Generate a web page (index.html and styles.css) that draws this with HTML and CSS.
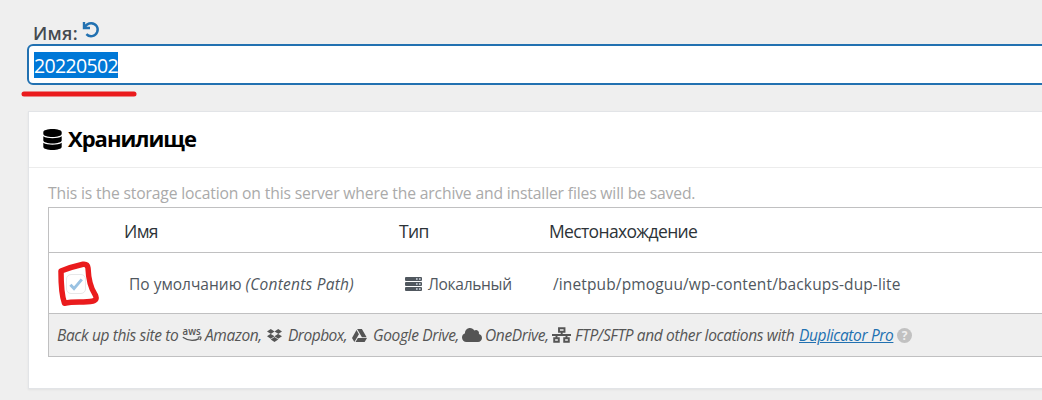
FILE: index.html
```html
<!DOCTYPE html>
<html lang="ru">
<head>
<meta charset="utf-8">
<title>Duplicator</title>
<link rel="stylesheet" href="styles.css">
</head>
<body>
<main class="page">
  <div class="name-row"><label class="name-label" for="package-name">Имя:</label>
    <svg class="undo" viewBox="0 0 18 18"><path d="M2 1v6h6M2.6 6.600C4 3.700 6.200 2.200 9.300 2.200a6.500 6.500 0 1 1-4.900 10.900" fill="none" stroke="currentColor" stroke-width="2.400"/></svg>
  </div>
  <div class="name-input" id="package-name"><span class="selected">20220502</span></div>
  <svg class="mark mark-line" viewBox="0 0 116 8"><path d="M3 4H113" /></svg>
  <section class="box">
    <header class="box-head">
      <svg class="db" viewBox="0 0 448 512"><path d="M448 73.143v45.714C448 159.143 347.667 192 224 192S0 159.143 0 118.857V73.143C0 32.857 100.333 0 224 0s224 32.857 224 73.143zM448 176v102.857C448 319.143 347.667 352 224 352S0 319.143 0 278.857V176c48.125 33.143 136.208 48.572 224 48.572S399.874 209.143 448 176zm0 160v102.857C448 479.143 347.667 512 224 512S0 479.143 0 438.857V336c48.125 33.143 136.208 48.572 224 48.572S399.874 369.143 448 336z"/></svg>
      <h2 class="box-title">Хранилище</h2>
    </header>
    <div class="box-body">
      <p class="hint">This is the storage location on this server where the archive and installer files will be saved.</p>
      <div class="table">
        <div class="row head"><span></span><span class="th-name">Имя</span><span class="th-type">Тип</span><span class="th-loc">Местонахождение</span></div>
        <div class="row item">
          <span class="check"><svg class="tick" viewBox="0 0 14 13"><path d="M1.400 6.800L5 10.600L12.800 1.400" fill="none" stroke="currentColor" stroke-width="3"/></svg></span>
          <span class="td"><span class="td-name">По умолчанию</span> <i class="td-path">(Contents Path)</i></span>
          <span class="td type"><svg class="server" viewBox="0 0 17 14"><path d="M1 0h15q1 0 1 1v2q0 1-1 1H1Q0 4 0 3V1Q0 0 1 0zM1 5h15q1 0 1 1v2q0 1-1 1H1Q0 9 0 8V6Q0 5 1 5zM1 10h15q1 0 1 1v2q0 1-1 1H1q-1 0-1-1v-2q0-1 1-1z" fill="currentColor"/><path d="M11 1.200h1.600v1.600H11zM14 1.200h1.600v1.600H14zM11 6.200h1.600v1.600H11zM14 6.200h1.600v1.600H14zM11 11.200h1.600v1.600H11zM14 11.200h1.600v1.600H14z" fill="#cfd8e4"/></svg><span class="td-local">Локальный</span></span>
          <span class="td td-loc">/inetpub/pmoguu/wp-content/backups-dup-lite</span>
        </div>
        <div class="row foot">
          <span class="f f-back">Back up this site to</span>
          <svg class="ic ic-aws" viewBox="0 0 20 14"><text class="aws-text" x="0.6" y="6.8" textLength="18" lengthAdjust="spacingAndGlyphs">aws</text><path d="M.8 9.200C6 12.800 12.500 13 17.200 10.600M15.800 9.300Q18.800 8.500 19 9.200Q19.200 10.500 17.800 12" fill="none" stroke="currentColor" stroke-width="1.300"/></svg>
          <span class="f f-amazon">Amazon,</span>
          <svg class="ic ic-dropbox" viewBox="0 32 528 448" preserveAspectRatio="none"><path d="M264.400 116.300l-132 84.300 132 84.300-132 84.300L0 284.100l132.300-84.300L0 116.300 132.300 32l132.100 84.300zM131.600 395.700l132-84.300 132 84.300-132 84.300-132-84.300zm132.800-111.600l132-84.300-132-83.600L395.700 32 528 116.300l-132.300 84.300L528 284.800l-132.300 84.300-131.300-85z"/></svg>
          <span class="f f-dropbox">Dropbox,</span>
          <svg class="ic ic-drive" viewBox="0 32 512 448" preserveAspectRatio="none"><path d="M339 314.900L175.400 32h161.200l163.600 282.900H339zm-137.500 23.600L120.900 480h310.500L512 338.500H201.500zM154.100 67.400L0 338.500 80.600 480 237 208.800 154.100 67.400z"/></svg>
          <span class="f f-google">Google Drive,</span>
          <svg class="ic ic-cloud" viewBox="0 32 640 448" preserveAspectRatio="none"><path d="M537.600 226.600c4.100-10.700 6.400-22.400 6.400-34.600 0-53-43-96-96-96-19.700 0-38.100 6-53.300 16.200C367 64.200 315.300 32 256 32c-88.400 0-160 71.600-160 160 0 2.700.1 5.400.2 8.100C40.200 219.800 0 273.200 0 336c0 79.500 64.500 144 144 144h368c70.700 0 128-57.300 128-128 0-61.900-44-113.600-102.400-125.400z"/></svg>
          <span class="f f-one">OneDrive,</span>
          <svg class="ic ic-net" viewBox="0 0 19 16"><path d="M7 1.200h5.500v3.600H7zM2.200 11.200h4.600v3.600H2.200zM12.200 11.200h4.600v3.600h-4.600zM9.700 5v3M0 8h19M4.500 8v3M14.500 8v3" fill="none" stroke="currentColor" stroke-width="1.900"/></svg>
          <span class="f f-ftp">FTP/SFTP and other locations with</span>
          <a class="f f-pro" href="#">Duplicator Pro</a>
          <span class="help">?</span>
        </div>
        <svg class="mark mark-loop" viewBox="0 0 46 46"><path d="M4 11C10 8.500 18 6 26 4.200Q30.500 3.700 31 8C31.500 20 33 27 38 34.500Q41 39.500 36 41C26 43 18 41 7.500 43.200Q4 34 4 11Z"/></svg>
      </div>
    </div>
  </section>
</main>
</body>
</html>
```
FILE: styles.css
```css
* { box-sizing: border-box; }
body { margin: 0; background: #efefef; overflow: hidden; width: 1042px; height: 400px; font-family: "Open Sans", "Noto Sans", sans-serif; color: #50575e; font-size: 15.5px; white-space: nowrap; }
.page { position: relative; padding: 18px 0 0 27px; }
.name-row { display: flex; height: 26px; padding-left: 6px; gap: 4px; }
.name-label { font-size: 18px; line-height: 30px; font-weight: 600; width: 45px; color: #444a50; letter-spacing: 0.3px; }
.undo { width: 18px; height: 18px; color: #2271b1; margin-top: 3px; }
.name-input { height: 41px; width: 1030px; border: 2px solid #2271b1; border-radius: 6px; background: #fff; padding: 6px 0 0 5px; }
.selected { display: block; width: 84px; height: 26px; background: #0078d7; color: #fff; font-size: 19.5px; line-height: 28px; letter-spacing: -0.66px; }
.mark { position: absolute; fill: none; stroke: #ea1b1d; stroke-linecap: round; stroke-linejoin: round; }
.mark-line { left: 21px; top: 90px; width: 116px; height: 8px; stroke-width: 5; }
.box { margin: 26px 0 0 1px; width: 1030px; height: 278px; border: 1px solid #e2e4e7; background: #fff; box-shadow: 0 1px 2px rgba(0,0,0,.06); }
.box-head { height: 56px; border-bottom: 1px solid #ececec; display: flex; align-items: center; padding-left: 14px; color: #000; gap: 6px; }
.db { width: 19px; height: 21px; }
.box-title { margin: -4px 0 0; font-size: 22px; line-height: 30px; font-weight: 700; letter-spacing: -1px; }
.box-body { padding: 13px 0 0 19px; }
.hint { margin: 0; height: 26px; line-height: 25px; color: #aaa; font-size: 15.7px; letter-spacing: -0.16px; }
.table { position: relative; width: 1020px; height: 150px; border: 1px solid #c0c0c1; }
.row { display: grid; grid-template-columns: 75px 275px 150px 1fr; align-items: center; }
.head { height: 45px; border-bottom: 1px solid #c0c0c1; color: #2c3338; font-size: 17.5px; padding-top: 1px; letter-spacing: -0.65px; }
.item { height: 61px; border-bottom: 1px solid #c0c0c1; padding-top: 2px; }
.td { padding-left: 5px; }
.td-path { letter-spacing: 0.24px; }
.td-local { letter-spacing: -0.3px; }
.td-loc { padding-left: 4px; letter-spacing: 0.13px; }
.type { display: flex; align-items: center; gap: 6px; padding-left: 6px; }
.server { width: 17px; height: 14px; }
.check { width: 20px; height: 20px; margin-left: 17px; border: 1px solid #e7e8e9; border-radius: 5px; display: flex; align-items: center; justify-content: center; }
.tick { width: 14px; height: 13px; color: #9ac2e2; }
.foot { display: flex; height: 42px; background: #efefef; padding-left: 8px; font-style: italic; color: #555; }
.f { flex: none; white-space: nowrap; letter-spacing: -0.36px; }
.f-back { width: 125px; }
.f-amazon { width: 62px; }
.f-dropbox { width: 64px; letter-spacing: -0.5px; }
.f-google { width: 89px; }
.f-one { width: 67px; }
.f-ftp { width: 224px; }
.f-pro { width: 94px; color: #2271b1; text-decoration: underline; margin-right: 4px; }
.ic { flex: none; fill: currentColor; }
.ic-aws { width: 20px; height: 14px; margin-right: 3px; overflow: visible; }
.aws-text { font: 600 10.5px "Open Sans", sans-serif; }
.ic-dropbox { width: 15px; height: 13px; margin-right: 6px; }
.ic-drive { width: 15px; height: 13px; margin-right: 6px; }
.ic-cloud { width: 20px; height: 14px; margin-right: 3px; }
.ic-net { width: 19px; height: 16px; margin-right: 4px; fill: none; }
.help { width: 15px; height: 15px; border-radius: 50%; background: #c1c1c1; color: #efefef; font: bold 12px/15px "Open Sans", sans-serif; text-align: center; }
.mark-loop { left: 8px; top: 52px; width: 46px; height: 46px; stroke-width: 5.5; }
```
